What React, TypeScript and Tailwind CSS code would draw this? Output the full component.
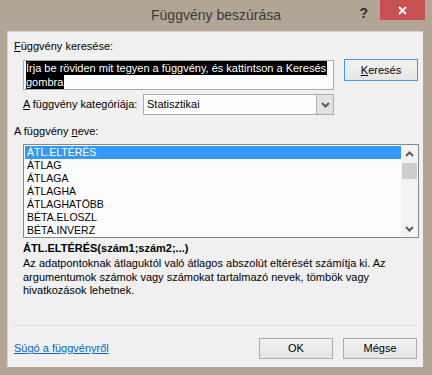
import React from "react";

const items = ["ÁTL.ELTÉRÉS", "ÁTLAG", "ÁTLAGA", "ÁTLAGHA", "ÁTLAGHATÖBB", "BÉTA.ELOSZL", "BÉTA.INVERZ"];

function Chevron({ up = false }: { up?: boolean }) {
  return (
    <svg width="9" height="6" viewBox="0 0 9 6" className="block">
      <path
        d={up ? "M1 5 L4.5 1.5 L8 5" : "M1 1 L4.5 4.5 L8 1"}
        fill="none"
        stroke="#5a5a5a"
        strokeWidth="2"
      />
    </svg>
  );
}

function Button({ children, focused = false }: { children: React.ReactNode; focused?: boolean }) {
  return (
    <div
      className={
        focused
          ? "w-[74px] h-[22px] flex items-center justify-center border border-[#3d9be9] bg-gradient-to-b from-[#f1f1f1] to-[#e6e6e6] text-[11px] text-black"
          : "w-[74px] h-[21px] flex items-center justify-center border border-[#acacac] bg-gradient-to-b from-[#f1f1f1] to-[#e6e6e6] text-[11px] text-black"
      }
    >
      {children}
    </div>
  );
}

export default function App() {
  return (
    <div className="w-[432px] h-[375px] bg-[#b3a596] flex flex-col font-['Liberation_Sans',Arial,sans-serif] overflow-hidden">
      {/* Title bar */}
      <div className="h-[31px] grid grid-cols-[1fr_auto_1fr]">
        <div />
        <div className="pt-[6px] text-[14px] text-[#3a3a3a] leading-[18px]">Függvény beszúrása</div>
        <div className="flex justify-end items-start pr-[7px]">
          <div className="mt-[5px] mr-[12px] text-[14px] font-bold text-[#2e2e2e] leading-[16px]">?</div>
          <div className="w-[45px] h-[20px] bg-[#c75050] flex items-center justify-center">
            <svg width="9" height="9" viewBox="0 0 9 9">
              <path d="M1 1 L8 8 M8 1 L1 8" stroke="#ffffff" strokeWidth="1.8" />
            </svg>
          </div>
        </div>
      </div>

      {/* Client area */}
      <div className="ml-[7px] w-[416px] h-[336px] bg-[#f0f0f0] border-t border-l border-[#d8d0c8] flex flex-col pb-[8px] text-[11px] text-black">
        <div className="ml-[6px] mt-[8px] h-[13px] leading-[13px]">
          <span className="underline">F</span>üggvény keresése:
        </div>

        <div className="mt-[6px] ml-[15px] flex items-start">
          <div className="mt-[1px] w-[311px] h-[30px] border border-[#a9a9a9] bg-[#fcfcfc] pl-[2px] flex flex-col items-start whitespace-nowrap">
            <span className="h-[14px] leading-[14px] bg-black text-white pr-[1px]">
              Írja be röviden mit tegyen a függvény, és kattintson a Keresés
            </span>
            <span className="h-[14px] leading-[14px] bg-black text-white pr-[1px]">gombra</span>
          </div>
          <div className="ml-[10px]">
            <Button focused>
              <span className="underline">K</span>eresés
            </Button>
          </div>
        </div>

        <div className="mt-[4px] ml-[15px] h-[21px] flex items-center">
          <div className="w-[120px]">
            <span className="underline">A</span> függvény kategóriája:
          </div>
          <div className="w-[191px] h-[21px] border border-[#acacac] bg-[#fcfcfc] flex">
            <div className="flex-1 pl-[3px] flex items-center">Statisztikai</div>
            <div className="w-[17px] border-l border-[#acacac] bg-[#e3e3e3] flex items-center justify-center">
              <Chevron />
            </div>
          </div>
        </div>

        <div className="ml-[6px] mt-[10px] h-[13px] leading-[13px]">
          A függvény <span className="underline">n</span>eve:
        </div>

        <div className="mt-[6px] ml-[15px] w-[396px] h-[94px] border border-[#828790] bg-[#fcfcfc] flex">
          <div className="flex-1 pl-[1px] pt-[1px] text-[10.5px]">
            {items.map((it, i) => (
              <div
                key={it}
                className={
                  i === 0
                    ? "h-[13px] leading-[13px] pl-[2px] bg-[#3399ff] text-white"
                    : "h-[13px] leading-[13px] pl-[2px]"
                }
              >
                {it}
              </div>
            ))}
          </div>
          <div className="w-[17px] bg-[#f3f3f3] flex flex-col items-center">
            <div className="h-[18px] flex items-center justify-center">
              <Chevron up />
            </div>
            <div className="w-[15px] h-[16px] bg-[#cdcdcd]" />
            <div className="flex-1" />
            <div className="h-[17px] flex items-center justify-center">
              <Chevron />
            </div>
          </div>
        </div>

        <div className="ml-[15px] mt-[4px] h-[13px] leading-[13px] font-bold">ÁTL.ELTÉRÉS(szám1;szám2;...)</div>
        <div className="ml-[15px] mt-[2px] w-[396px] leading-[13.5px]">
          Az adatpontoknak átlaguktól való átlagos abszolút eltérését számítja ki. Az argumentumok számok vagy
          számokat tartalmazó nevek, tömbök vagy hivatkozások lehetnek.
        </div>

        <div className="mt-auto mx-[6px] h-px bg-[#dcdcdc]" />
        <div className="mt-[12px] mx-[6px] flex items-center">
          <div className="flex-1 text-[#0066cc] underline">Súgó a függvényről</div>
          <div className="flex gap-[10px]">
            <Button>OK</Button>
            <Button>Mégse</Button>
          </div>
        </div>
      </div>
    </div>
  );
}
